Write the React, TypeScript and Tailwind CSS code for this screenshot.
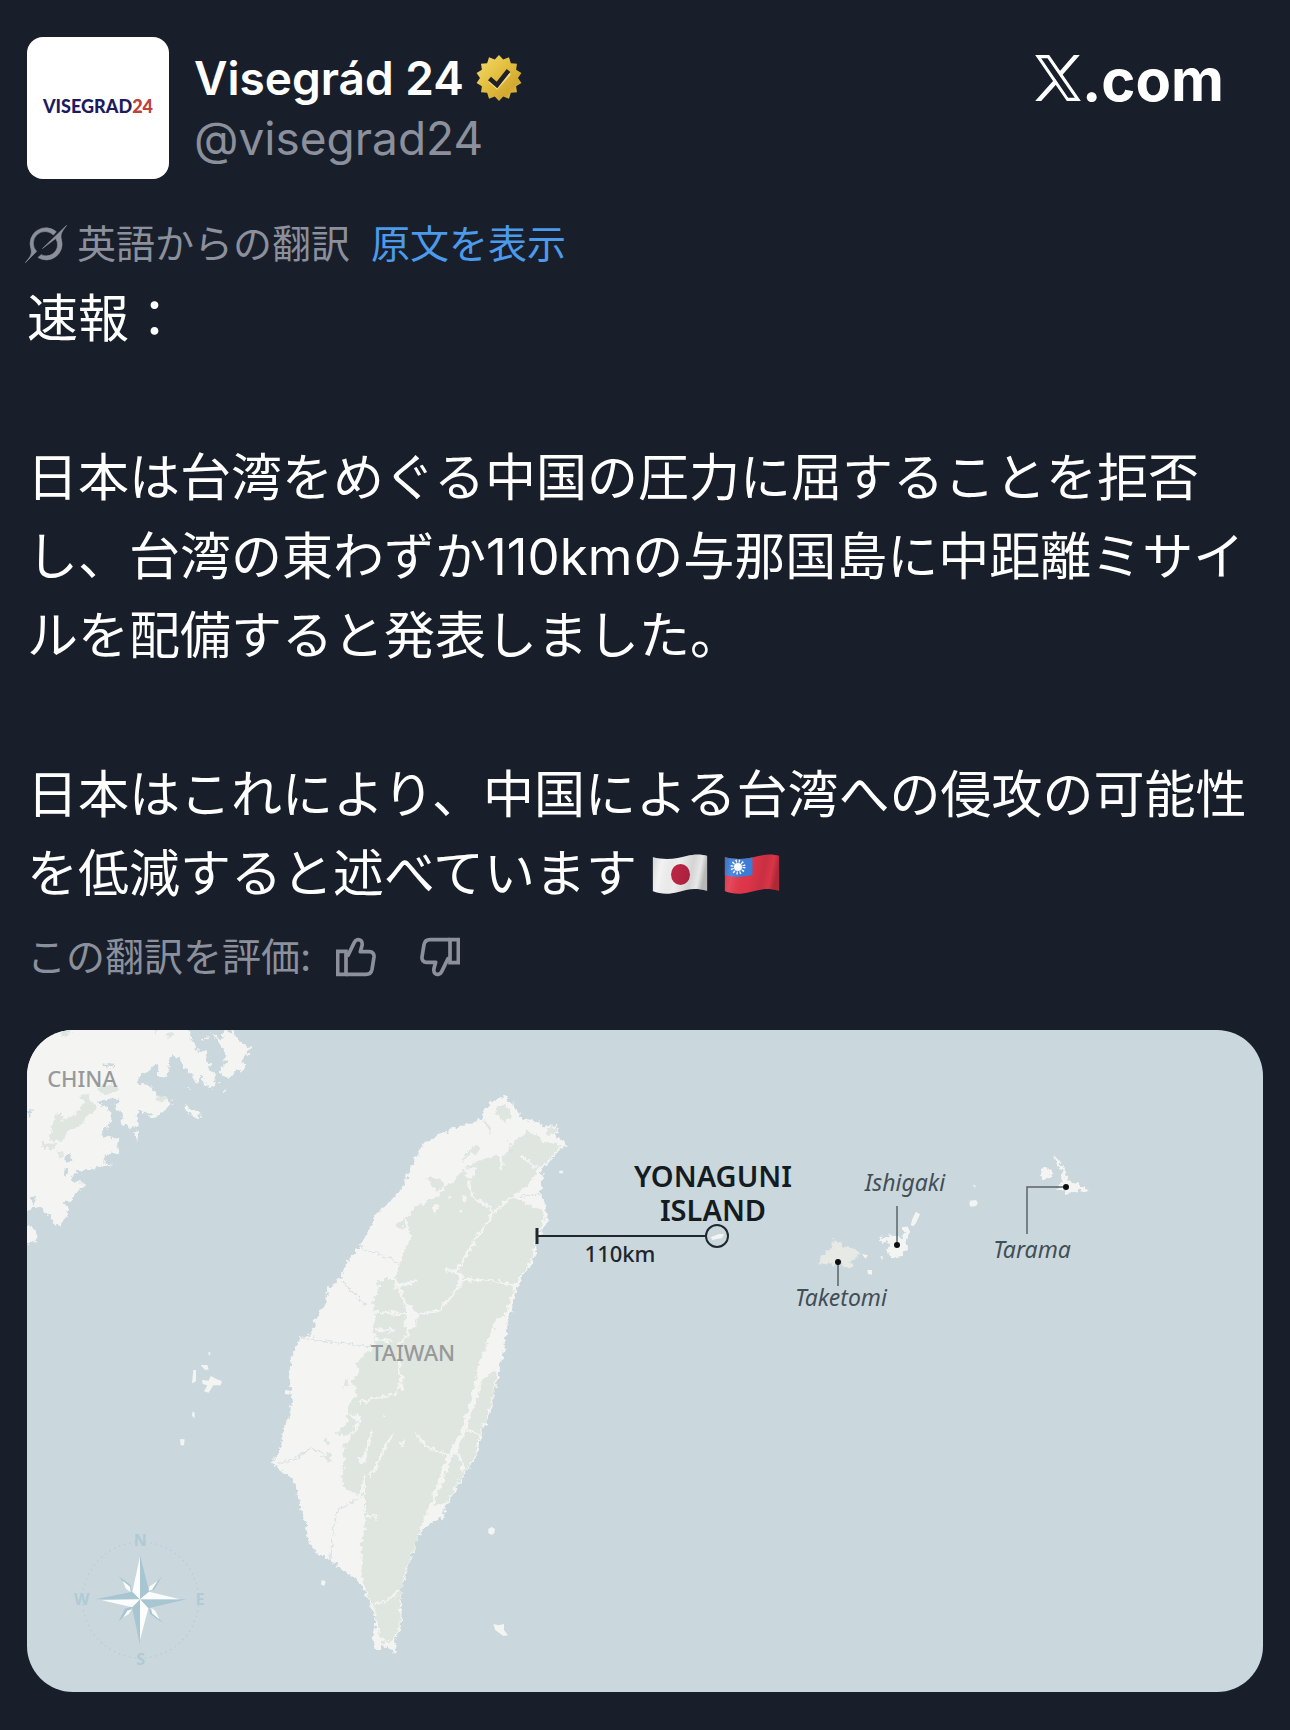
import type { ReactNode } from "react";

const sealPoints = Array.from({ length: 28 }, (_, i) => {
  const angle = (i * Math.PI) / 14 - Math.PI / 2;
  const radius = i % 2 === 0 ? 23 : 19;
  return `${(23 + radius * Math.cos(angle)).toFixed(2)},${(23 + radius * Math.sin(angle)).toFixed(2)}`;
}).join(" ");

function VerifiedSeal() {
  return (
    <svg viewBox="0 0 46 46" className="size-[46px] shrink-0" role="img" aria-label="認証済み">
      <defs>
        <linearGradient id="seal-gold" x1="0" y1="0" x2="1" y2="1">
          <stop offset="0" stopColor="#f2de72" />
          <stop offset="0.45" stopColor="#e3be3e" />
          <stop offset="0.75" stopColor="#d3a931" />
          <stop offset="1" stopColor="#e8c95a" />
        </linearGradient>
      </defs>
      <polygon points={sealPoints} fill="url(#seal-gold)" />
      <path d="M14 25.500l7 6.500 12.500-14" fill="none" stroke="#f3e08a" strokeWidth="4" />
      <path d="M13.500 23.500l7.500 6.500 11.500-14.500" fill="none" stroke="#1f2126" strokeWidth="4.500" />
    </svg>
  );
}

function XMark() {
  return (
    <svg viewBox="106 75 137 138" className="size-[46px] shrink-0" fill="#fff" aria-hidden="true">
      <path fillRule="evenodd" d="M106 75h42l95 138h-42zM124 85l81 118h20L143 85z" />
      <path d="M222 75h18l-57 65-7-12zM106 213h18l49-54-8-12z" />
    </svg>
  );
}

function GrokMark() {
  return (
    <svg
      viewBox="44 71 130 118"
      className="-ml-[2px] h-[38px] w-[42px] shrink-0"
      fill="currentColor"
      stroke="currentColor"
      strokeWidth="2"
      aria-hidden="true"
    >
      <path d="M45 188C56 173 68 164 62 144A49 49 0 0 1 141 92L132 102A36 36 0 0 0 80 153z" />
      <path d="M173 72L98 144L139 113Q145 122 145 133A35 35 0 0 1 94 163L84 172A49 49 0 0 0 157 117C152 99 160 90 173 72z" />
    </svg>
  );
}

function ThumbShape() {
  return (
    <svg viewBox="0 0 120 116" className="size-10" fill="none" stroke="currentColor" strokeWidth="11" aria-hidden="true">
      <path d="M5 41h25v69H5z" />
      <path
        d="M30 53h6l19-39c4-8 13-11 20-5 5 5 4 14 1 22l-3 11h27c10 0 15 7 14 16l-6 37c-2 10-9 15-18 15H30"
        strokeLinejoin="round"
      />
    </svg>
  );
}

function Flag({ label, children, id }: { label: string; id: string; children: ReactNode }) {
  return (
    <svg viewBox="0 0 55 40" className="inline-block h-10 w-14" role="img" aria-label={label}>
      <defs>
        <clipPath id={id}>
          <path d="M0 3C14 7 26 4 34 2 42 0 49 0 55 2V37C41 33 34 36 26 38 15 41 8 40 0 37z" />
        </clipPath>
        <linearGradient id={`${id}-shade`} x1="0" x2="1" y1="0" y2="0.15">
          <stop offset="0" stopColor="#000" stopOpacity="0.14" />
          <stop offset="0.2" stopColor="#fff" stopOpacity="0.1" />
          <stop offset="0.5" stopColor="#000" stopOpacity="0.02" />
          <stop offset="0.76" stopColor="#000" stopOpacity="0.12" />
          <stop offset="0.9" stopColor="#000" stopOpacity="0.04" />
          <stop offset="1" stopColor="#000" stopOpacity="0.24" />
        </linearGradient>
      </defs>
      <g clipPath={`url(#${id})`}>
        {children}
        <rect width="55" height="40" fill={`url(#${id}-shade)`} />
      </g>
    </svg>
  );
}

function JapanFlag() {
  return (
    <Flag label="日本の国旗" id="flag-jp">
      <rect width="55" height="40" fill="#f1f1f1" />
      <ellipse cx="28" cy="20.500" rx="9.500" ry="10.500" fill="#bd2545" />
    </Flag>
  );
}

function TaiwanFlag() {
  return (
    <Flag label="台湾の旗" id="flag-tw">
      <rect width="55" height="40" fill="#e3364a" />
      <path d="M0 0h28v21c-9 2-18 3-28 0z" fill="#3b7fdc" />
      <circle cx="13.500" cy="13" r="6" fill="none" stroke="#fff" strokeWidth="3" strokeDasharray="1.300 1.840" />
      <circle cx="13.500" cy="13" r="4" fill="#fff" />
    </Flag>
  );
}

const LAND = "#f4f5f2";
const FOREST = "#dfe5df";

function ChinaCoast() {
  return (
    <g transform="translate(20 1020) scale(0.3333)">
      <g fill={LAND} filter="url(#coast-rough)">
        <path d="M0 0H500L510 45 520 70 530 90 560 95 565 120 570 150 585 160 582 203 562 203 545 165 530 192 515 165 500 150 480 120 455 103 445 120 445 160 430 174 414 166 415 130 395 140 380 160 365 158 350 190 385 195 410 225 440 235 457 246 430 275 410 290 370 280 352 268 350 300 357 318 330 327 305 308 305 275 283 262 302 240 248 250 265 270 280 300 250 330 245 345 275 355 297 350 288 370 296 397 255 405 250 425 282 436 240 435 200 450 170 455 150 480 190 488 192 505 165 520 155 545 133 545 147 570 140 590 125 610 105 617 95 592 80 580 60 565 40 563 22 575 0 580z" />
        <path d="M568 34L600 62 612 52 608 34 640 34 648 55 668 75 698 84 680 105 664 116 680 145 645 155 627 175 592 155 618 132 614 92 596 68z" />
        <path d="M0 610L35 618 50 640 46 666 22 670 0 670z" />
        <path d="M492 256l12 0 16 14 24 8-10 20-14-12-26-16zM342 338l12-6 0 16-6 14zM545 60l20-14-4 10-12 8zM505 205l8 2-4 10zM608 206l12 4-6 10zM595 186l8 2-4 8z" />
      </g>
      <g fill={FOREST} filter="url(#coast-rough)">
        <path d="M178 225l28-2 2 22 20 10-6 20-22 14-20 26-30 14-22 32-36 2 4-40 8-36 18-8 6 24 36-16 18-24 10-20zM65 368l44 4 2 14-44-2zM110 390l24 10-16 18zM230 205l40-14 26 10-10 18-42 2zM405 230l26 0 6 14-18 6zM440 40l24-8-4 16-20 8zM120 34l40-4-20 18-18 0zM398 30l20 2-12 8z" />
      </g>
      <g fill="#cad8de" filter="url(#coast-rough)">
        <path d="M248 130l34 4 0 8-34-4zM232 246l66-14-4 12-50 12zM22 270l22 2-20 18zM134 410l18-6 2 14-14 12zM36 535l10-6 0 26-8 0zM130 450l18-2-12 24z" />
      </g>
    </g>
  );
}

function TaiwanIsland() {
  return (
    <g transform="translate(260 1080) scale(0.3333)">
      <path
        filter="url(#coast-rough)"
        fill={LAND}
        d="M735 50L755 68 770 95 790 118 830 125 850 135 888 138 892 170 925 193 905 205 880 230 865 250 845 268 846 300 845 350 862 395 862 430 845 455 830 480 828 520 810 560 790 585 770 625 760 655 757 690 745 720 735 780 722 860 712 900 705 930 690 1000 672 1040 655 1100 650 1130 610 1190 575 1250 558 1280 550 1310 490 1345 470 1380 455 1430 440 1480 428 1510 422 1560 425 1600 420 1650 405 1685 410 1722 385 1702 364 1700 348 1710 334 1665 345 1640 345 1610 330 1570 310 1530 295 1500 255 1475 215 1445 165 1415 155 1395 140 1370 138 1330 120 1270 105 1220 95 1195 60 1170 38 1150 45 1130 60 1110 70 1050 95 990 95 940 88 880 90 860 105 800 120 775 150 765 165 725 195 670 205 625 245 590 260 545 300 500 325 450 345 405 385 365 430 320 440 285 470 230 490 190 545 160 590 140 635 130 665 110 675 85 700 60z"
      />
      <g fill={FOREST} filter="url(#coast-rough)">
        <path d="M760 190L800 155 830 165 850 185 905 195 870 235 845 260 830 272 822 300 780 330 760 350 800 372 845 390 855 405 845 440 826 480 818 530 795 570 765 612 755 650 738 695 705 725 690 770 660 840 645 900 635 960 615 1010 598 1070 568 1120 545 1170 530 1230 510 1270 500 1300 480 1350 455 1420 428 1500 420 1560 418 1640 400 1680 372 1692 355 1650 345 1590 320 1540 305 1490 305 1400 315 1330 315 1180 300 1240 280 1240 250 1220 245 1185 255 1150 250 1100 265 1070 225 1060 258 1035 270 970 292 940 275 900 300 880 290 845 345 800 338 740 348 710 338 680 358 600 402 600 418 560 430 510 455 480 440 410 470 380 530 350 570 310 600 280 640 245 700 228 740 226z" />
        <path d="M690 880L710 872 700 940 680 1010 650 1090 645 1130 600 1200 560 1265 530 1280 520 1262 548 1200 570 1130 610 1060 640 980 668 900z" />
        <path d="M712 75l26 0 18 30-20 25-16-22-16-6zM500 292l44 4 8 20-16 20-22-20zM408 430l26-12 4 20-22 12zM632 205l20-10 10 12-20 18zM862 140l24 4 0 24-24-6zM195 1075l10 6-4 14-8-8zM196 1120l14-2 6 24-14 10zM252 900l14-4 0 24-12 4z" />
      </g>
      <g fill={LAND} filter="url(#coast-rough)">
        <path d="M612 270l38-12-6 30-24 8zM520 378l18-4-6 22-16 2zM562 350l10-2-4 14zM606 352l18 2-12 14zM598 390l10-2-2 10zM430 672l22 8 24 20-10 44-26 14-6-30 8-20zM590 570l18 10 0 34-16 6zM820 290l22-10 0 50-60 14zM345 745l55 2 0 8-55-2zM290 1135l24-10 10 20-18 6zM420 1090l10-6 2 18-8 0zM368 1005l8-4 0 10zM410 915l24-2 0 18-16 4zM270 1000l30 6 4 20-20-6z" />
      </g>
      <g fill="none" stroke={LAND} strokeWidth="7" filter="url(#coast-rough)">
        <path d="M775 340C740 360 720 380 695 405 680 440 660 455 645 480 625 520 600 545 590 575 580 575 565 572 555 570M600 600C640 604 700 590 765 620M595 620C580 650 550 670 545 690L470 705 405 700 345 695M628 300C625 345 650 365 690 380L695 400M720 225l6 45M400 590C430 630 430 670 445 700L440 770 420 790C410 820 418 860 422 880L425 910" />
        <path d="M640 245L600 270 575 310M780 225L830 262" />
        <path d="M300 970C330 960 345 950 415 940M250 1085C290 1060 290 1030 305 1020M310 1140C320 1110 325 1080 340 1055M330 1190C360 1150 370 1100 400 1060M470 1065C500 1110 530 1120 565 1122M610 1045L660 1065M340 1575C370 1570 390 1560 418 1530M310 1320C320 1310 330 1305 355 1310M580 1110C600 1120 610 1150 605 1180M340 775L400 785" />
        <path d="M668 860C650 900 645 960 625 1010 610 1060 590 1100 565 1140 545 1190 540 1220 520 1250" strokeWidth="14" />
        <path d="M735 740C705 770 690 820 660 880" strokeWidth="22" />
        <path d="M520 1290L500 1330M400 620L470 605" strokeWidth="10" />
      </g>
      <g fill="none" stroke="#dbe1e4" strokeWidth="4" filter="url(#coast-rough)">
        <path d="M125 775C200 780 250 795 335 800M325 515C370 520 390 540 420 552M250 600C270 640 300 650 320 680M300 495L320 510M50 1150C90 1145 110 1140 140 1110 170 1100 180 1120 190 1130M212 1440C215 1380 220 1340 232 1290 260 1270 290 1265 310 1240M640 200L605 245M670 120L695 155M780 350L840 342M745 180L755 215" />
      </g>
      <g fill={LAND}>
        <path d="M898 272l12 0-2 8-10 0zM75 930l16 2-4 12-12-2zM185 1500l12 4-4 14-10-4zM685 1347l10-6 10 6-2 12-8 6-10-6zM700 1632l16 4 16-4 0 18 12 16-14 2-24-18zM195 650l14 8-6 6z" />
      </g>
    </g>
  );
}

function SmallIslands() {
  return (
    <g fill={LAND}>
      <g transform="translate(780 1140) scale(0.3333)">
        <g filter="url(#coast-rough)">
          <path
            fill="#e6e9e4"
            d="M115 370L130 345 150 330 158 300 178 306 190 318 235 330 236 345 215 365 212 388 185 370 150 372z"
          />
          <path d="M298 290L325 292 330 280 345 295 368 290 370 265 390 262 385 290 375 310 382 330 355 350 330 352 318 330 335 310 300 302z" />
          <path d="M780 90l18-8 20 16-6 16-24 6zM822 48l10 4 6 16 14 16 8 26 20 20 38 10 4 16-30-4-34 10-6-14-22-2 16-22 2-30-14-14z" />
        </g>
        <path d="M392 255l6-20 10-20 12 8-12 26-8 10zM246 342l18 4-8 10zM262 390l14 0 0 14-12-2zM300 350l8-2 0 12zM570 182l18-2 6 8-6 10-16 2-4-8zM578 136l8 0 0 8z" />
      </g>
      <g transform="translate(50 1330) scale(0.3333)">
        <path d="M452 105l20 0 4 14-12 0zM430 120l8 0 0 34-12 6zM456 150l20 2 6-14 16 8 18 8-4 12-22 0-14 22-14-4 10-18-14-4zM474 66l8 2-4 10zM428 244l6 4 0 16-8-6zM390 328l14 0-2 18-10 0z" />
      </g>
    </g>
  );
}

function Compass() {
  return (
    <g transform="translate(50 1330) scale(0.3333)">
      <circle cx="272" cy="810" r="174" fill="none" stroke="#b4ccd7" strokeWidth="4" strokeDasharray="4 12" />
      <g fill="#a8c5d2">
        <path d="M205 738l36 26 6 24zM337 738l-24 40-18 8zM205 876l20-40 26-8zM340 880l-40-28-4-18z" />
        <path d="M270 675L298 785 270 808zM410 808L295 835 270 808zM270 945L246 832 270 808zM135 808L247 785 270 808z" />
      </g>
      <g fill="#fbfdfd">
        <path d="M270 680L247 785 270 808zM390 808L297 785 270 808zM270 930L295 835 270 808zM155 811L247 832 270 808z" />
        <path d="M218 752l22 18 2 16-14-10zM322 754l-24 16-2 12 10-2zM220 862l12-20 14-4-10 14zM328 868l-22-18-2-16 12 8z" />
      </g>
      <g fill="#b0cad6" className="font-['Open_Sans'] text-[48px] font-bold" textAnchor="middle">
        <text x="271" y="648">N</text>
        <text x="95" y="826">W</text>
        <text x="450" y="826">E</text>
        <text x="272" y="1005">S</text>
      </g>
    </g>
  );
}

function MapLabels() {
  return (
    <g className="font-['Noto_Sans']" textAnchor="middle">
      <g fill="none" stroke="#20282d" strokeWidth="2">
        <path d="M537 1236H706" />
        <path d="M537 1228V1244" strokeWidth="3" />
        <circle cx="717" cy="1236" r="11" />
      </g>
      <path d="M711 1237l8-3 5 0-2 4-10 2z" fill={LAND} />
      <g fill="none" stroke="#59636a" strokeWidth="1.500">
        <path d="M897 1206V1245M838 1262V1286M1066 1187H1027V1234" />
      </g>
      <g fill="#0b0f12">
        <circle cx="897" cy="1245" r="3" />
        <circle cx="838" cy="1262" r="3" />
        <circle cx="1066" cy="1187" r="3" />
      </g>
      <g fill="#151c21" className="text-[29px] font-semibold">
        <text x="713" y="1187">YONAGUNI</text>
        <text x="713" y="1221">ISLAND</text>
      </g>
      <text x="620" y="1262" fill="#1d262b" className="text-[22px] font-medium">110km</text>
      <g fill="#434e55" className="text-[23px] italic">
        <text x="905" y="1191">Ishigaki</text>
        <text x="841" y="1306">Taketomi</text>
        <text x="1032" y="1258">Tarama</text>
      </g>
      <g fill="#97999a" className="text-[22px] font-medium">
        <text x="82" y="1087">CHINA</text>
        <text x="413" y="1361">TAIWAN</text>
      </g>
    </g>
  );
}

function YonaguniMap() {
  return (
    <svg
      viewBox="27 1030 1236 662"
      className="block h-auto w-full rounded-[46px] bg-[#cad8de]"
      role="img"
      aria-label="台湾と与那国島の地図"
    >
      <defs>
        <filter id="coast-rough" x="-5%" y="-5%" width="110%" height="110%">
          <feTurbulence type="fractalNoise" baseFrequency="0.07" numOctaves="3" seed="7" result="noise" />
          <feDisplacementMap in="SourceGraphic" in2="noise" scale="24" xChannelSelector="R" yChannelSelector="G" />
        </filter>
      </defs>
      <ChinaCoast />
      <TaiwanIsland />
      <SmallIslands />
      <Compass />
      <MapLabels />
    </svg>
  );
}

export default function App() {
  return (
    <main className="min-h-screen w-full bg-[#181f2a] px-[27px] pt-[37px] pb-[37px] font-['Inter','Noto_Sans_CJK_JP',sans-serif] text-white">
      <article>
        <header className="flex items-start gap-[25px]">
          <div className="flex size-[142px] shrink-0 items-center justify-center rounded-[16px] bg-white pb-1 font-['Lato'] text-[18px] leading-none font-black text-[#1d1b5e]">
            VISEGRAD<span className="text-[#c0403a]">24</span>
          </div>
          <div className="min-w-0 flex-1 pt-[11px]">
            <div className="flex items-center gap-3">
              <h1 className="text-[46px] leading-[60px] font-semibold">Visegrád 24</h1>
              <VerifiedSeal />
            </div>
            <a href="#visegrad24" className="block text-[46px] leading-[60px] text-[#8b909c]">
              @visegrad24
            </a>
          </div>
          <div className="mr-[39px] flex items-start gap-px pt-[18px]" aria-label="X.com">
            <XMark />
            <span className="text-[58px] leading-[50px] font-bold">.com</span>
          </div>
        </header>

        <div className="mt-[39px] flex items-center text-[39px] leading-[52px] text-[#8b909c]">
          <GrokMark />
          <span className="ml-[10px]">英語からの翻訳</span>
          <a href="#original" className="ml-[21px] text-[#4c9aeb]">
            原文を表示
          </a>
        </div>

        <div className="mt-[9px] flex flex-col gap-20 text-[51px] leading-[79px]">
          <p>速報：</p>
          <p>
            日本は台湾をめぐる中国の圧力に屈することを拒否
            <br />
            し、台湾の東わずか110kmの与那国島に中距離ミサイ
            <br />
            ルを配備すると発表しました。
          </p>
          <p>
            日本はこれにより、中国による台湾への侵攻の可能性
            <br />
            <span className="inline-flex items-center">
              を低減すると述べています
              <span className="ml-[15px] flex items-center gap-4">
                <JapanFlag />
                <TaiwanFlag />
              </span>
            </span>
          </p>
        </div>

        <div className="mt-[18px] flex items-center text-[39px] leading-[52px] text-[#8b909c]">
          <span>この翻訳を評価:</span>
          <button type="button" aria-label="良い翻訳" className="ml-[25px]">
            <ThumbShape />
          </button>
          <button type="button" aria-label="悪い翻訳" className="ml-11 rotate-180">
            <ThumbShape />
          </button>
        </div>

        <div className="mt-[47px]">
          <YonaguniMap />
        </div>
      </article>
    </main>
  );
}
